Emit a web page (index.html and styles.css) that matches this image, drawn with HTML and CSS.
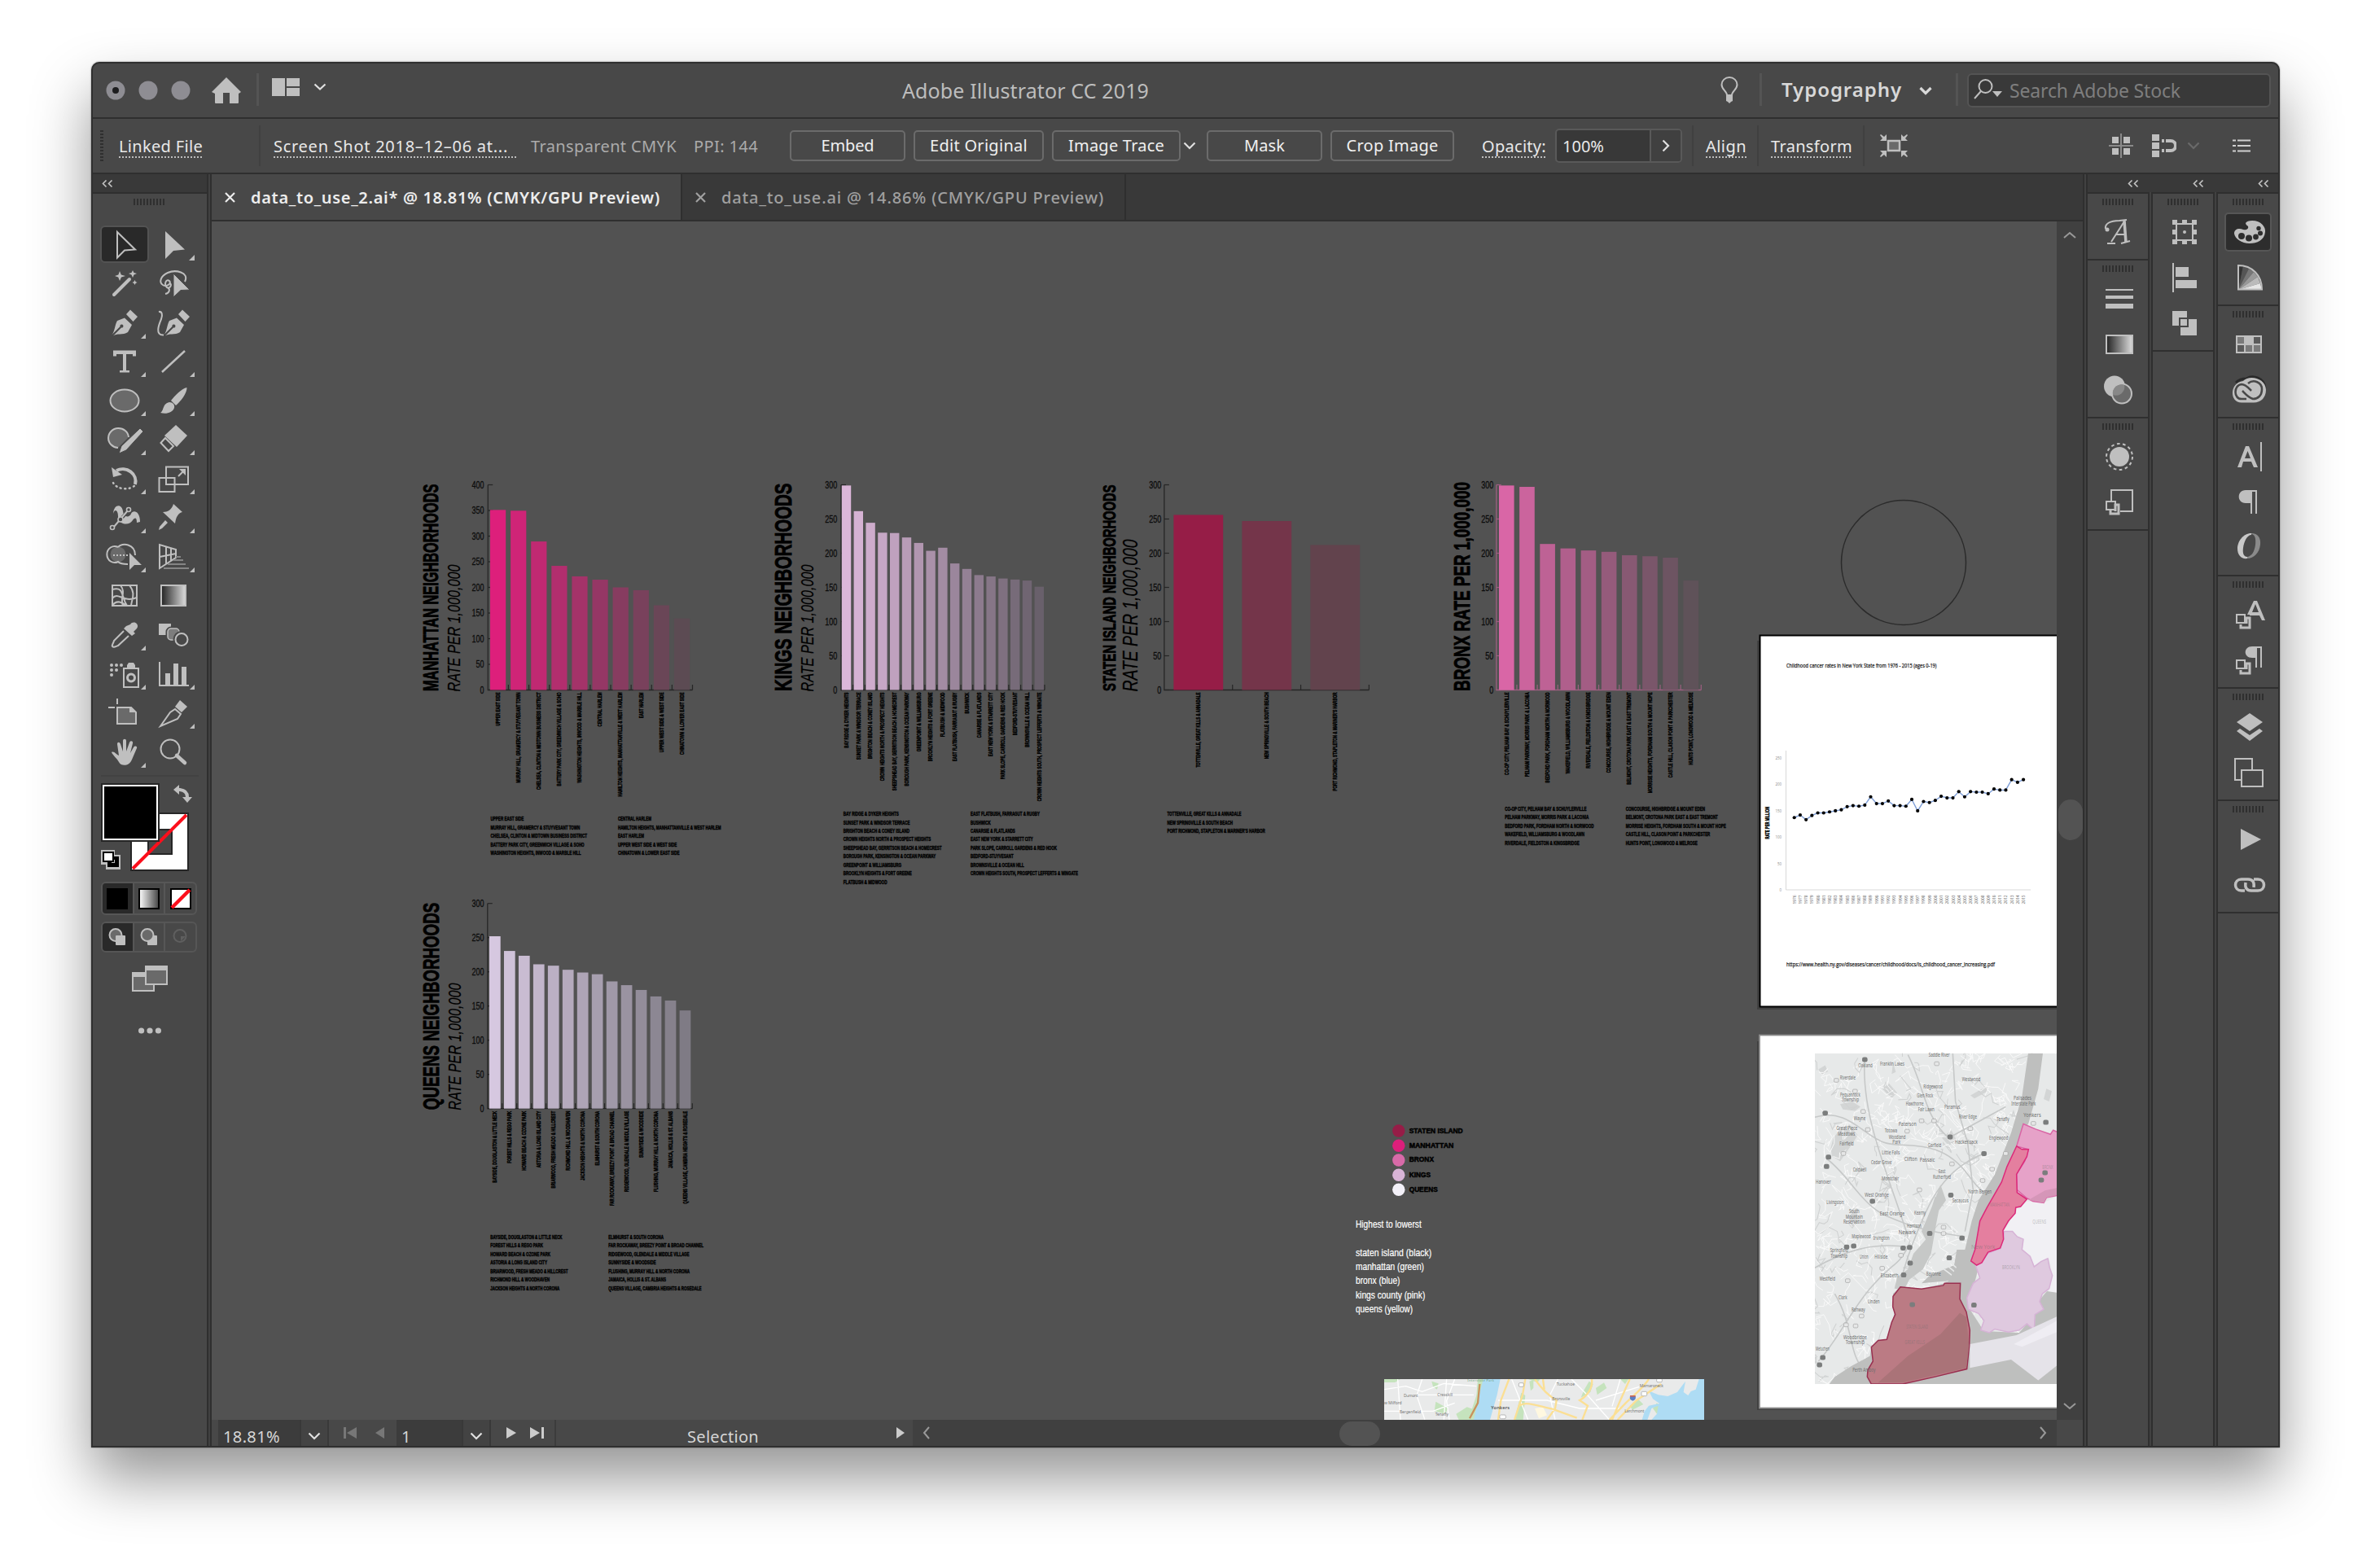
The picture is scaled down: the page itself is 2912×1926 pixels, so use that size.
FILE: index.html
```html
<!DOCTYPE html>
<html lang="en">
<head>
<meta charset="utf-8">
<title>Adobe Illustrator CC 2019</title>
<link rel="stylesheet" href="styles.css">
</head>
<body>
<div class="window">
  <header class="titlebar">
    <svg class="lights" width="104" height="26" viewBox="130 99 104 26"><g class="light"><circle cx="142" cy="112" r="11.5"/><circle cx="182" cy="112" r="11.5"/><circle cx="222" cy="112" r="11.5"/></g><circle cx="142" cy="112" r="4" fill="#1d1d1f"/></svg>
    <svg class="home" width="36" height="32" viewBox="0 0 36 32"><path class="f" d="M18 0L36 18l-3 2v11q0 1-1 1H22V19h-8v13H5q-1 0-1-1V20l-4-2z"/></svg>
    <i class="rule r-home"></i>
    <svg class="arrange" width="34" height="22" viewBox="0 0 34 22"><path class="f" d="M0 0h16v22H0zM18 0h16v10H18zM18 12h16v10H18z"/></svg>
    <svg class="arrange-chev" width="16" height="10" viewBox="0 0 16 10"><path class="chev" d="M1.5 1.5L8 7.5l6.5-6"/></svg>
    <h1 class="app-title" data-fit="303">Adobe Illustrator CC 2019</h1>
    <svg class="bulb" width="22" height="34" viewBox="0 0 22 34"><path class="s" d="M8 23C8 18 1.5 16 1.5 10a9.5 9 0 0 1 19 0c0 6-6.500 8-6.500 13z"/><path class="f" d="M7 23h8v7l-2 1-2 2-2-2-2-1z"/></svg>
    <i class="rule r-bulb"></i>
    <span class="workspace" data-fit="148">Typography</span>
    <svg class="ws-chev" width="16" height="11" viewBox="0 0 16 11"><path class="chev bold" d="M1.500 2L8 8.500 14.500 2"/></svg>
    <i class="rule r-ws"></i>
    <div class="search">
      <svg width="36" height="28" viewBox="0 0 36 28"><circle class="s" cx="14.500" cy="9" r="8"/><path class="s" d="M9 15L1 24"/><path class="f" d="M23 15h12l-6 7z"/></svg>
      <span data-fit="210">Search Adobe Stock</span>
    </div>
  </header>

  <div class="control">
    <i class="dots"></i>
    <span class="link linked" data-fit="103">Linked File</span>
    <i class="bar b1"></i>
    <span class="link file"><span data-fit="288">Screen Shot 2018–12–06 at...</span></span>
    <span class="dim mode" data-fit="179">Transparent CMYK</span>
    <span class="dim ppi" data-fit="79">PPI: 144</span>
    <button class="btn embed"><span data-fit="65">Embed</span></button>
    <button class="btn edit"><span data-fit="120">Edit Original</span></button>
    <button class="btn trace"><span data-fit="118">Image Trace</span></button>
    <svg class="trace-chev" width="16" height="10" viewBox="0 0 16 10"><path class="chev" d="M1.500 1.500L8 8l6.500-6.500"/></svg>
    <button class="btn mask"><span data-fit="50">Mask</span></button>
    <button class="btn crop"><span data-fit="113">Crop Image</span></button>
    <span class="link opacity" data-fit="79">Opacity:</span>
    <div class="field"><span class="value" data-fit="51">100%</span><span class="step"><svg width="10" height="16" viewBox="0 0 10 16"><path class="chev" d="M1.500 1.500L8 8l-6.500 6.500"/></svg></span></div>
    <i class="bar b2"></i>
    <span class="link align" data-fit="50">Align</span>
    <i class="bar b3"></i>
    <span class="link transform" data-fit="100">Transform</span>
    <i class="bar b4"></i>
    <svg class="isolate" width="34" height="30" viewBox="0 0 34 30"><rect x="10" y="9" width="14" height="12" fill="#6a6a6a" stroke="#bfbfbf" stroke-width="2.500"/><path class="f" d="M8 1v8H0l3-3-3-4 1-1 4 3zM26 1v8h8l-3-3 3-4-1-1-4 3zM8 29v-8H0l3 3-3 4 1 1 4-3zM26 29v-8h8l-3 3 3 4-1 1-4-3z"/></svg>
    <svg class="snap" width="30" height="30" viewBox="0 0 30 30"><path class="f" d="M4 4h8v8H4zM18 4h8v8h-8zM4 18h8v8H4zM18 18h8v8h-8z"/><path d="M15 0v30M0 15h30" stroke="#8a8a8a" stroke-width="2"/></svg>
    <svg class="magnet" width="30" height="28" viewBox="0 0 30 28"><path class="f" d="M0 0h9v8H0zM0 10h9v8H0zM0 20h9v8H0z"/><path d="M17 8h6a6 6 0 0 1 0 12h-6" fill="none" stroke="#bfbfbf" stroke-width="4"/><path class="f" d="M12 6h3v4h-3zM12 18h3v4h-3z"/></svg>
    <svg class="dim-chev" width="16" height="10" viewBox="0 0 16 10"><path class="chev" d="M1.500 1.500L8 8l6.500-6.500"/></svg>
    <svg class="menu" width="22" height="16" viewBox="0 0 22 16"><path d="M0 1.500h4M0 8h4M0 14.500h4M6 1.500h16M6 8h16M6 14.500h16" stroke="#cfcfcf" stroke-width="2"/></svg>
  </div>

  <main class="content">
    <aside class="toolbox">
      <div class="panel-head left"><svg width="14" height="9" viewBox="0 0 14 9"><path class="coll" d="M5.500.5l-4 4 4 4M12.500.5l-4 4 4 4"/></svg></div>
      <div class="toolbody">
        <i class="grip"></i>
        <div class="tools">
          <svg class="on"><path class="s" d="M-9-15L13 6.500 0 7.500-9 16.500z"/></svg>
          <svg><path class="f" d="M-10-16L14 6.500 0 8-10 18z"/><path class="f" d="M26 13v7h-7z"/></svg>
          <svg><path d="M-13 14L6-5" stroke="#bfbfbf" stroke-width="4" stroke-linecap="round"/><path class="f" d="M-6-15l1.800 4.500L1-9l-5 1.600L-6-3l-1.800-4.400L-12-9l4.400-1.500zM10-16l1.500 3 3.500 1-3.500 1.500L10-7l-1.500-3.500L5-12l3.500-1zM12.500-4l1 2 2 1-2 1-1 2-1-2-2-1 2-1z"/></svg>
          <svg><path class="s" d="M14-2C20-14 2-17-7-13-16-9-18-1-13 2-8 5-2 0-5-3-9-6-12 1-8 5-4 7-2 2-4 0M-8 5C-3 7-5 12-10 13"/><path class="f" d="M0-12L20 8 9 8.500 0 17z" stroke="#484848"/></svg>
          <svg><path class="f" d="M-16 15.500C-12 12-12 3-9-2L0-5.500 9 3 4 12C-2 16-10 13-14 16.500L-4 6.500A2 2 0 1 0-5.500 5zM2-10L7-15.500 16-7 10.500-1z"/><path class="f" d="M26 14v6h-6z"/></svg>
          <svg><path class="f" d="M-12 15.500C-8 12-8 3-5-2L4-5.500 13 3 8 12C2 16-6 13-10 16.500L0 6.500A2 2 0 1 0-1.500 5zM6-10L11-15.500 20-7 14.500-1z"/><path class="s" d="M-18-13c4-1 5 4 3 9-3 7-8 20 3 19.500"/></svg>
          <svg><path class="f" d="M-14-13.500h28v7h-4v-2.500H2v20h4V13.500H-6V11h4V-9h-8v2.500h-4z"/><path class="f" d="M26 13v6h-6z"/></svg>
          <svg><path d="M-14 13L14-13" stroke="#bfbfbf" stroke-width="2.500"/><path class="f" d="M26 13v6h-6z"/></svg>
          <svg><ellipse cx="0" cy="0" rx="17.500" ry="13.500" fill="#6a6a6a" stroke="#bfbfbf" stroke-width="2"/><path class="f" d="M26 13v6h-6z"/></svg>
          <svg><path class="f" d="M16.500-16C17-9 8 2 3 6L-3 0C1-5 10-15 16.500-16zM-5 2c4 0 7 3 6 7-2 6-10 8-17 6 5-3 2-11 11-13z"/><path class="f" d="M26 13v6h-6z"/></svg>
          <svg><path d="M5-3A12.500 12 0 1 0-8 10" fill="#6a6a6a" stroke="#bfbfbf" stroke-width="2"/><path class="f" d="M19-14l4 4L2 13l-9 4 3-9z" stroke="#484848"/><path class="f" d="M26 13v6h-6z"/></svg>
          <svg><path class="f" d="M3-18L17-5 4 9-11-5z"/><path class="s" d="M-10-2l-5.500 6L-6 14l6-6z"/><path class="f" d="M26 13v6h-6z"/></svg>
          <svg><path d="M-10-10A16 15 0 0 1 13 7" fill="none" stroke="#bfbfbf" stroke-width="4"/><path class="f" d="M-16-14l2 12 11-3z"/><path d="M-14 5A16 12 0 0 0 13 8" fill="none" stroke="#bfbfbf" stroke-width="2.500" stroke-dasharray="1 4.500" stroke-linecap="round"/><path class="f" d="M26 13v6h-6z"/></svg>
          <svg><path class="s" d="M-9-14.500h27V7H-9zM-17.500-1H1.500v17h-19zM6-3l7-7"/><path class="f" d="M7-12h8v8z"/><path class="f" d="M26 13v6h-6z"/></svg>
          <svg><path class="f" d="M-14-5C-13-18-3-17-2-8-1 0 6 0 8-5 10-10 19-9 19 5L15 6C15 0 13-1 10 3 5 11-8 8-8-2-8-9-12-12-14-5z"/><path d="M-14 12L5-9" stroke="#484848" stroke-width="4"/><path class="s" d="M-13 11L4-9"/><g class="node"><circle cx="-15" cy="12" r="2.500"/><circle cx="-5" cy="2" r="3"/><circle cx="5" cy="-10" r="2.500"/></g><path class="f" d="M26 13v6h-6z"/></svg>
          <svg><path class="f" d="M0-17L11-7C6-6 3-1 2 7L-13-7C-7-7-2-10 0-17zM-10 3l3 3-7 7-4 2 1-4z"/><path class="f" d="M26 13v6h-6z"/></svg>
          <svg><circle cx="-8" cy="-3" r="9.500" fill="#6a6a6a"/><path class="s" d="M-8-12C-3-18 13-16 13-2M-8-12a9.500 10 0 1 0 0 18C-5 9-1 9 4 9"/><path d="M-14-2H5" stroke="#bfbfbf" stroke-width="2" stroke-dasharray="2 2"/><path class="f" d="M6-5L21 10l-9 0-6 6z"/><path class="f" d="M26 13v6h-6z"/></svg>
          <svg><path class="s" d="M-17-15V14L3 1V-9zM-17 0L3-4M-9-12V9M-3-10V5"/><path d="M3 0h6M0 4h12M-7 9H15M-12 14H19" stroke="#858585" stroke-width="2"/><path class="f" d="M26 13v6h-6z"/></svg>
          <svg><path class="s" d="M-15-13h30v25h-30zM-15 3C-8-6-2 9 15 2M-5-13C2-4-6 2-2 12M6-13c8 10 3 16 2 25M-15-8C0-12-5 0 3 12M-15 12C-10 4-2 8 2 12"/></svg>
          <svg><rect x="-15" y="-13" width="30" height="25" fill="url(#gr)" stroke="#bfbfbf" stroke-width="2"/></svg>
          <svg><path class="f" d="M7-13c4-6 12 0 8 5l-4 4 2 2-4 3L-1-8l3-3z"/><path class="s" d="M-1-5L-13 7c-1 4-3 5-2 7 2 2 4 0 7-1L5 1"/><path class="f" d="M26 13v6h-6z"/></svg>
          <svg><path class="f" d="M-18-14h15v14h-15z"/><rect x="-7" y="-8" width="14" height="14" rx="4" fill="#7d7d7d" stroke="#484848" stroke-width="5"/><rect x="-7" y="-8" width="14" height="14" rx="4" fill="#7d7d7d" stroke="#bfbfbf" stroke-width="1.500"/><circle cx="10" cy="5.500" r="8" fill="#484848" stroke="#484848" stroke-width="5"/><circle class="s" cx="10" cy="5.500" r="7.500"/></svg>
          <svg><path class="s" d="M-1-7h18v23H-1z"/><circle cx="8" cy="4.500" r="4.500" fill="none" stroke="#bfbfbf" stroke-width="3"/><path class="f" d="M3-7v-4l2-3h6l2 3v4z"/><g class="f"><circle cx="-16" cy="-11" r="2"/><circle cx="-10" cy="-11" r="2"/><circle cx="-4" cy="-11" r="2"/><circle cx="-16" cy="-5" r="2"/><circle cx="-10" cy="-5" r="2"/><circle cx="-16" cy="1" r="2"/></g><path class="f" d="M26 13v6h-6z"/></svg>
          <svg><path class="s" d="M-17-15V14h36"/><path class="f" d="M-10-1h6v14h-6zM0-13h6v26H0zM10-9h6v22h-6z"/><path class="f" d="M26 13v6h-6z"/></svg>
          <svg><path d="M-9-7H8l6 6V13H-9z" fill="#6a6a6a" stroke="#bfbfbf" stroke-width="2"/><path class="f" d="M6-8l8 7H6z"/><path class="s" d="M-20-7h8M-9-18v7"/></svg>
          <svg><path class="s" d="M-16 16L-4-1 2-5 9 1 5 7z"/><path class="f" d="M8-16L17-8 10-1 2-8z"/><path class="f" d="M26 13v6h-6z"/></svg>
          <svg><path class="f" d="M-16 0c3-2 6 3 9 4L-9-10c0-3 3-3 4 0l3 9 0-13c0-3 4-3 4 0V-1L6-12c1-3 5-2 4 1L7 1l4-7c2-3 5-1 4 1L9 9C6 17-4 18-7 12-9 8-15 3-16 0z"/><path class="f" d="M26 13v6h-6z"/></svg>
          <svg><circle class="s" cx="-4" cy="-4" r="11.500"/><path d="M4 4L14 13" stroke="#bfbfbf" stroke-width="4.500" stroke-linecap="round"/></svg>
        </div>
        <svg class="swatches" width="124" height="124" viewBox="122 950 124 124">
          <path d="M124 953h120" stroke="#424242" stroke-width="2"/>
          <rect x="160" y="998" width="72" height="72" fill="#262626"/><rect x="162" y="1000" width="68" height="68" fill="#fff"/><rect x="181" y="1018" width="31" height="32" fill="#262626"/><rect x="183" y="1020" width="27" height="28" fill="#484848"/><path d="M163 1067L229 1001" stroke="#fc0f1c" stroke-width="4"/>
          <rect x="124" y="962" width="72" height="72" fill="#262626"/><rect x="126" y="964" width="68" height="68" fill="#fff"/><rect x="128" y="966" width="64" height="64" fill="#000"/>
          <path d="M219 970h2q9 1 9 9" fill="none" stroke="#bfbfbf" stroke-width="4"/><path class="f" d="M213 970l7-6v12zM224 979h12l-6 7z"/>
          <path class="f" d="M124 1044h17v6h7v18h-18v-6h-6z"/><path fill="#000" d="M132 1052h14v13h-14z"/><path fill="#bfbfbf" d="M137 1056h4v4h-4z"/><rect x="127" y="1047" width="12" height="11" fill="#fff" stroke="#000" stroke-width="2"/>
        </svg>
        <div class="segments paint">
          <span class="on"><svg width="28" height="28" viewBox="0 0 28 28"><rect x="1" y="1" width="26" height="26" fill="#000"/></svg></span>
          <span><svg width="28" height="28" viewBox="0 0 28 28"><rect x="2" y="2" width="24" height="24" fill="url(#gw)" stroke="#000" stroke-width="2"/></svg></span>
          <span><svg width="28" height="28" viewBox="0 0 28 28"><rect x="2" y="2" width="24" height="24" fill="#fff" stroke="#000" stroke-width="2"/><path d="M3 25L25 3" stroke="#fc0f1c" stroke-width="4.500"/></svg></span>
        </div>
        <div class="segments draw">
          <span class="on"><svg width="22" height="22" viewBox="0 0 22 22"><circle cx="9" cy="8.500" r="7.500" fill="#6a6a6a" stroke="#bfbfbf" stroke-width="2"/><rect class="f" x="9" y="9" width="12" height="12" rx="1"/></svg></span>
          <span><svg width="22" height="22" viewBox="0 0 22 22"><rect class="f" x="9" y="9" width="12" height="12" rx="1"/><circle cx="9" cy="8.500" r="7.500" fill="#6a6a6a" stroke="#bfbfbf" stroke-width="2"/></svg></span>
          <span><svg width="22" height="22" viewBox="0 0 22 22"><circle cx="10" cy="9.500" r="7.500" fill="none" stroke="#5f5f5f" stroke-width="2"/><path fill="#5f5f5f" d="M11 10h6l-6 6z"/></svg></span>
        </div>
        <svg class="screen" width="44" height="33" viewBox="0 0 44 33"><rect x="1" y="9" width="26" height="22" fill="#6a6a6a" stroke="#bfbfbf" stroke-width="2"/><path class="f" d="M0 8h28v6H0z"/><rect x="17" y="1" width="26" height="22" fill="#6a6a6a" stroke="#bfbfbf" stroke-width="2"/><path class="f" d="M16 0h28v6H16z"/></svg>
        <svg class="more" width="28" height="8" viewBox="0 0 28 8"><g class="f"><circle cx="3.600" cy="4" r="3.600"/><circle cx="14" cy="4" r="3.600"/><circle cx="24.400" cy="4" r="3.600"/></g></svg>
      </div>
    </aside>
    <i class="gutter"></i>
    <section class="document">
      <nav class="tabs">
        <div class="tab active"><svg width="13" height="13" viewBox="0 0 13 13"><path d="M1 1l11 11M12 1L1 12"/></svg><span data-fit="503">data_to_use_2.ai* @ 18.81% (CMYK/GPU Preview)</span></div>
        <div class="tab second"><svg width="13" height="13" viewBox="0 0 13 13"><path d="M1 1l11 11M12 1L1 12"/></svg><span data-fit="470">data_to_use.ai @ 14.86% (CMYK/GPU Preview)</span></div>
      </nav>
      <div class="view">
        <svg class="art" id="art" width="2266" height="1472" viewBox="260 272 2266 1472">
          <defs>
            <linearGradient id="gr"><stop offset="0" stop-color="#222"/><stop offset="1" stop-color="#ddd"/></linearGradient>
            <linearGradient id="gw"><stop offset="0" stop-color="#fff"/><stop offset="1" stop-color="#444"/></linearGradient>
            <clipPath id="mapclip"><rect x="297" y="837" width="900" height="637"/></clipPath>
            <clipPath id="colorclip"><rect x="180" y="1002" width="1179" height="150"/></clipPath>
          </defs>
          <circle cx="2338" cy="691" r="76.500" fill="none" stroke="#2b2b2b" stroke-width="1.500"/>
          <rect x="2158" y="787" width="400" height="453" fill="#414141"/>
          <rect x="2161.500" y="780.500" width="400" height="456" fill="#fff" stroke="#000" stroke-width="2"/>
          <rect x="2158" y="1279" width="400" height="453" fill="#414141"/>
          <rect x="2161" y="1271.500" width="400" height="458" fill="#fff" stroke="#8e8e8e" stroke-width="1.800"/>
          <g transform="translate(2130 760) scale(.33333 .63776)"><g clip-path="url(#mapclip)" id="graymap">
            <rect x="297" y="837" width="900" height="637" fill="#e7e9e9"/>
            <g fill="#d3d5d5"><path d="M365 1000l30-20 30-5 30 20-25 20-40 30-30-10-5-15zM390 935l45-5 30 10-20 8-45-3zM545 905l25-10 30 18-20 10zM310 868l25-8 10 12-25 6zM870 918l55-16 10 8-50 14zM585 855l10 18-15 4zM430 1140l20-10 5 30-20 15-15-10zM1150 905l20 5-10 20-20-5zM765 1000l35-15 20 20-30 10z"/></g>
            <g fill="none" stroke="#c3c5c5" id="roads"></g>
            <path fill="#bebfbe" d="M1083 837H1137L1120 905 1085 970 1060 1000 1040 1045 980 1100 930 1160 905 1225 900 1250 880 1290 868 1330 920 1372 1050 1375 1188 1290V1474H470L350 1474 370 1460 430 1440 500 1420 505 1400 560 1388 590 1340 585 1300 612 1287 690 1291 775 1280 790 1275 690 1280 720 1265 810 1245 820 1215 850 1215 875 1160 900 1120 960 1070 1020 990 1060 920z"/>
            <path fill="#c6c8c7" d="M590 1290l10-22 40-15 20-30 50-30 0-30 30-50 20 10-15 40-20 60-30 30-50 20-20 20zM690 1180l40-50 30-40 20 30-40 30-30 50z"/>
            <path d="M760 1235l50 22M770 1228l48 22M755 1246l46 18" stroke="#e7e9e9" stroke-width="3"/>
            <g stroke-width="1.500">
              <path fill="#f1f0f4" d="M1078 1122L1140 1125 1197 1110V1300L1150 1310 1172 1265 1160 1232 1105 1248 1060 1215 1035 1185 995 1178 1035 1145z"/>
              <path fill="#bebfbe" d="M1112 1320l40-25 36 3v45l-40 12-25-5 15-15z"/>
              <path class="ns" fill="#dfc9df" stroke="#d6b3d6" d="M995 1180L1025 1180 1042 1190 1065 1195 1060 1215 1090 1228 1105 1248 1130 1238 1155 1232 1162 1250 1172 1265 1160 1290 1135 1300 1125 1315 1140 1330 1108 1340 1105 1370 1078 1358 1050 1370 1010 1374 960 1368 940 1375 908 1370 920 1352 900 1338 862 1330 857 1308 880 1280 905 1270 890 1247 935 1222 980 1213z"/>
              <path fill="#e5e3e9" d="M868 1397L1040 1380 1197 1342V1435L1120 1467 1020 1427 868 1443z"/>
              <path fill="#efedf3" d="M1030 1397L1197 1350V1372L1060 1402z"/>
              <path class="ns" fill="#e6a2c8" stroke="#d965a5" d="M1065 973L1110 983 1165 993 1175 985 1197 990V1110L1150 1115 1140 1125 1100 1122 1078 1116 1042 1100 1040 1070 1070 1045 1084 1022 1040 1016z"/>
              <path fill="#d596b8" d="M1085 1119l60-18 45-5v14l-40 5-10 10z"/>
              <path class="ns" fill="#e47f9f" stroke="#dc2a7a" d="M1040 1016L1060 1022 1084 1022 1078 1036 1040 1070 1042 1105 1078 1118 1055 1132 1037 1134 1035 1145 1010 1160 990 1178 992 1195 980 1212 935 1220 912 1240 893 1245 872 1237 887 1215 905 1160 930 1135 985 1085 1005 1055z"/>
              <path class="ns" fill="#bb7b84" stroke="#993050" d="M833 1280L831 1310 855 1335 868 1370 866 1400 857 1445 740 1460 620 1474H505L490 1460 492 1447 511 1430 505 1403 530 1390 562 1388 580 1355 593 1340 584 1325 585 1305 612 1287 690 1291 770 1284 775 1280z"/>
              <path fill="#aa7378" d="M831 1337L855 1345 865 1400 855 1443 620 1471H530L640 1420 760 1378z"/>
            </g>
          </g></g>
          <g transform="translate(1640 1360) scale(.33333)"><g clip-path="url(#colorclip)" fill="none">
            <rect x="180" y="1002" width="1179" height="150" fill="#e9eaea"/>
            <g fill="#c5e3bd"><path d="M180 1002h60l-20 12h-40zM355 1010l25 8-5 22-15-10zM370 1085l45 25-10 20-40-10zM445 1130l40-25 30 10-20 37h-40zM525 1002h20l-25 150h-30l30-90zM710 1002h45l-10 12zM660 1152l25-100 15 10-8 90zM715 1010l15-5v30l-10 10zM935 1010l15 10-10 30-35 20 10-25zM960 1035l30-20 10 20-35 25zM1050 1002h30l-12 18zM1085 1100l30-25 20 20-40 20zM1185 1090l15 20-15 20-15-20z"/></g>
            <path fill="#fff8e0" d="M735 1110l30-5 15 30-30 12z"/>
            <g stroke="#fff" stroke-width="4"><path d="M180 1040l80-12 60 20 80-30 120 10M230 1002l10 150M320 1002l-20 60 30 90M410 1002l-10 150M180 1120h180l80-30M260 1060h250M440 1002l-30 80 10 70M650 1002l60 150M820 1002l-30 60 20 90M600 1080h180l120 30 150 0M870 1002l60 60 80 90M1050 1002l-30 100M960 1080l160-50"/></g>
            <path fill="#aedcf4" d="M545 1002H608L596 1060 570 1152H510L530 1060zM1359 1002H1340L1328 1040 1310 1047 1300 1062 1283 1050 1290 1010 1275 1030 1260 1050 1225 1065 1190 1060 1155 1045 1170 1075 1195 1092 1155 1100 1140 1120 1130 1152H1150L1165 1110 1190 1100 1185 1130 1165 1152H1359z"/>
            <path fill="#e9eaea" d="M1320 1002h14l-6 30-12-4zM1290 1030l16-20v30l-14 8z"/>
            <g stroke="#fbdf94" stroke-width="7"><path d="M640 1002L610 1080 600 1152M700 1002L690 1060 660 1152M735 1002C755 1030 780 1060 815 1080L810 1110 780 1152M765 1002L770 1040M680 1100C700 1080 760 1105 800 1112L890 1145M945 1002C950 1040 920 1070 900 1080L930 1100 910 1152M1155 1002C1130 1040 1100 1060 1070 1090L1010 1152M1200 1020L1110 1080 1040 1152M1085 1002l-40 90-25 60"/></g>
            <path d="M532 1020L525 1090 495 1147" stroke="#c8925c" stroke-width="7"/>
            <g fill="#fff" stroke="#999" stroke-width="2"><rect x="676" y="1016" width="18" height="14" rx="4"/><rect x="606" y="1134" width="22" height="14" rx="4"/><rect x="1128" y="1048" width="20" height="16" rx="4"/><rect x="1184" y="1000" width="20" height="13" rx="4"/></g>
            <path fill="#5b7fc4" d="M1086 1064h20c3 12-4 15-10 18-6-3-13-6-10-18z"/><path fill="#c65" d="M1086 1062h20v5h-20z"/>
            <g class="maplabel"><text x="252" y="1068" textLength="52">Dumont</text><text x="376" y="1064" textLength="56">Cresskill</text><text x="180" y="1094" textLength="65">w Milford</text><text x="237" y="1128" textLength="78">Bergenfield</text><text x="368" y="1137" textLength="49">Tenafly</text><text class="city" x="574" y="1112" textLength="68">Yonkers</text><text x="815" y="1026" textLength="67">Tuckahoe</text><text x="799" y="1080" textLength="66">Bronxville</text><text x="1121" y="1033" textLength="88">Mamaroneck</text><text x="1066" y="1125" textLength="72">Larchmont</text><text class="park" x="487" y="1011" textLength="98">Interstate Park</text></g>
          </g></g>
        </svg>
        <div class="vscroll">
          <svg class="up" width="16" height="10" viewBox="0 0 16 10"><path d="M1 8l7-6 7 6"/></svg>
          <i class="vthumb"></i>
          <svg class="down" width="16" height="10" viewBox="0 0 16 10"><path d="M1 2l7 6 7-6"/></svg>
        </div>
      </div>
      <footer class="status">
        <span class="zoom"><span data-fit="70">18.81%</span></span>
        <span class="drop"><svg width="16" height="10" viewBox="0 0 16 10"><path class="chev" d="M1.500 1.500L8 8l6.500-6.500"/></svg></span>
        <svg class="nav" width="80" height="18" viewBox="0 0 80 18"><g fill="#777"><path d="M4 2h3v14H4zM20 2v14L8 9zM54 2v14L43 9z"/></g></svg>
        <span class="page">1</span>
        <span class="drop"><svg width="16" height="10" viewBox="0 0 16 10"><path class="chev" d="M1.500 1.500L8 8l6.500-6.500"/></svg></span>
        <svg class="nav2" width="86" height="18" viewBox="0 0 86 18"><g fill="#ccc"><path d="M21 2v14l12-7zM50 2v14l12-7zM64 2h3v14h-3z"/></g></svg>
        <span class="tool"><span data-fit="88">Selection</span></span>
        <svg class="play" width="12" height="16" viewBox="0 0 12 16"><path fill="#ccc" d="M1 1v14l10-7z"/></svg>
        <div class="hscroll">
          <svg class="hl" width="10" height="16" viewBox="0 0 10 16"><path d="M8 1L2 8l6 7"/></svg>
          <i class="hthumb"></i>
          <svg class="hr" width="10" height="16" viewBox="0 0 10 16"><path d="M2 1l6 7-6 7"/></svg>
        </div>
        <i class="corner"></i>
      </footer>
    </section>
    <i class="gutter"></i>
    <aside class="dock">
      <div class="panel-head"><svg width="14" height="9" viewBox="0 0 14 9"><path class="coll" d="M5.500.5l-4 4 4 4M12.500.5l-4 4 4 4"/></svg></div>
      <div class="group"><i class="grip"></i>
        <svg><path class="s" d="M-15-4C-16-10-10-14 2-14L11-15"/><circle class="f" cx="-13" cy="-3" r="2.500"/><path class="s" d="M8-13L-8 12M-13 14h10M4 14l11-3M-3 3H8"/><path d="M8-14L10 13" stroke="#bfbfbf" stroke-width="3.500"/></svg></div>
      <div class="group"><i class="grip"></i>
        <svg><path class="f" d="M-15-12h34v2h-34zM-15-4h34v4h-34zM-15 6h34v6h-34z"/></svg>
        <svg><rect x="-14" y="-11" width="32" height="22" fill="url(#gr)" stroke="#bfbfbf" stroke-width="2"/></svg>
        <svg><circle class="f" cx="-4" cy="-4.500" r="13"/><circle cx="5" cy="4.500" r="12" fill="#6a6a6a" stroke="#bfbfbf" stroke-width="2"/><path fill="#888" d="M-6 6C-8-3 2-9 8-6 10 2 2 9-6 6z"/></svg></div>
      <div class="group"><i class="grip"></i>
        <svg><circle class="f" cx="2" cy="0" r="12"/><circle cx="2" cy="0" r="16" fill="none" stroke="#bfbfbf" stroke-width="2" stroke-dasharray="3.700 3.480"/></svg>
        <svg><path class="s" d="M-8-1v-14h26v26H3"/><path class="s" d="M-14-1h11v10h-11z"/><path d="M-9 10v4H1V3h-4v8" fill="none" stroke="#bfbfbf" stroke-width="3"/></svg></div>
      <div class="fill"></div>
    </aside>
    <i class="gutter low"></i>
    <aside class="dock">
      <div class="panel-head"><svg width="14" height="9" viewBox="0 0 14 9"><path class="coll" d="M5.500.5l-4 4 4 4M12.500.5l-4 4 4 4"/></svg></div>
      <div class="group"><i class="grip"></i>
        <svg><path class="s" d="M-8-10h20v20H-8z"/><path class="f" d="M-13-15h6v6h-6zM-1-15h6v5h-6zM11-15h6v6h-6zM-13-3h5v6h-5zM12-3h5v6h-5zM-13 9h6v6h-6zM-1 10h6v5h-6zM11 9h6v6h-6z"/><circle class="f" cx="2" cy="0" r="2"/></svg>
        <svg><path class="f" d="M-13-18h2v36h-2zM-9-13H7v12H-9zM-9 3h26v10H-9z"/></svg>
        <svg><path class="f" d="M-13-15H5v8h-10v10h-8zM7-5h10v20H-3V5H7zM-3-5h8v8h-8z"/></svg></div>
      <div class="fill"></div>
    </aside>
    <i class="gutter low"></i>
    <aside class="dock">
      <div class="panel-head"><svg width="14" height="9" viewBox="0 0 14 9"><path class="coll" d="M5.500.5l-4 4 4 4M12.500.5l-4 4 4 4"/></svg></div>
      <div class="group"><i class="grip"></i>
        <svg><rect x="-28" y="-23" width="56" height="46" rx="4" fill="#2d2d2d" stroke="#565656" stroke-width="2"/><path class="f" d="M5-14C16-14 22-6 21 0 20 10 11 14 2 14-8 14-16 8-17 2-17-4-11-5-6-3-2-2 1-4 0-7-1-8-3-9-3-11-2-13 1-14 5-14z"/><g fill="#2d2d2d"><circle cx="-8" cy="5" r="4"/><circle cx="1" cy="7.500" r="4"/><circle cx="9.500" cy="6" r="3.400"/><circle cx="15" cy="1.500" r="3"/><circle cx="13" cy="-4.500" r="2.700"/></g></svg>
        <svg><path fill="#333" d="M-12-15V15L-6-14z"/><path fill="#555" d="M-12 15L-6-14 1-11z"/><path fill="#777" d="M-12 15L1-11 7-7z"/><path fill="#999" d="M-12 15L7-7 12-1z"/><path fill="#bbb" d="M-12 15L12-1 15 7z"/><path fill="#e6e6e6" d="M-12 15L15 7 17 15z"/><path class="s" d="M-12-15V14.500H17C17-3 5-15-12-15z"/></svg></div>
      <div class="group"><i class="grip"></i>
        <svg><path class="f" d="M-15-11h32v22h-32z"/><path fill="#7a7a7a" d="M-13-9h8v8h-8zM-3 1h8v8h-8zM7 1h8v8H7z"/><path fill="#5a5a5a" d="M7-9h8v8H7zM-13 1h8v8h-8z"/></svg>
        <svg><path d="M-15-9C-10-14-4-14-2-14 6-19 20-15 21-2" fill="none" stroke="#2a2a2a" stroke-width="3"/><path class="f" d="M-8 15.500C-23 15.500-23-9-6-11 1-19 22-15 22 0 22 9 16 15.500 7 15.500z"/><path d="M-2 11H-8C-18 11-18-6-8-7-3-7 1-2 4 1M0-8C7-14 17-9 17-1 17 7 12 11 6 11 0 9-4 4-7 1" fill="none" stroke="#484848" stroke-width="2.600"/></svg></div>
      <div class="group"><i class="grip"></i>
        <svg><path class="f" fill-rule="evenodd" d="M-13 13L-3-13H1L12 13H7L4 6H-6L-8 13zM-4 2H3L-.500-7z"/><path class="f" d="M15-18h2v36h-2z"/></svg>
        <svg><path class="f" d="M-3-15H11V14H9V-13H5V14H3V1H-3C-14 1-14-15-3-15z"/></svg>
        <svg><path fill="#8a8a8a" fill-rule="evenodd" d="M4-18C12-18 16-12 15-4 14 6 7 13-1 13V11C5 10 8 4 9-4 10-12 8-17 4-17z"/><path fill="#c8c8c8" d="M4-18C-6-18-13-8-13 1-13 9-8 14-1 13V11C-5 11-7 7-6 0-5-8-1-16 4-16z"/></svg></div>
      <div class="group"><i class="grip"></i>
        <svg><path class="f" fill-rule="evenodd" d="M-1 0L7-17H11L21 7H17L14 1H2V0zM5-3H13L9-13z"/><path class="s" d="M-14 0h10v10h-10z"/><path d="M-9 12v4H2V4h-4v7" fill="none" stroke="#bfbfbf" stroke-width="3"/></svg>
        <svg><path class="f" d="M5-17H17V9H15V-15H11V9H9V-3H5C-6-3-6-17 5-17z"/><path class="s" d="M-14 0h10v10h-10z"/><path d="M-9 12v4H2V4h-4v7" fill="none" stroke="#bfbfbf" stroke-width="3"/></svg></div>
      <div class="group"><i class="grip"></i>
        <svg><path class="f" d="M2-17L18-6 2 5-14-6zM-14 5l4-3L2 10 14 2l4 3L2 17z"/></svg>
        <svg><path class="s" d="M-8 9h-8v-26H5v13M-8-3h26v20H-8z"/></svg></div>
      <div class="group"><i class="grip"></i>
        <svg><path class="f" d="M-9-13L16 0-9 13z"/></svg>
        <svg><path d="M-4 7H-8C-18 7-18-7-8-7H0C6-7 8-3 7 3M7-7H12C22-7 22 7 12 7H4C-2 7-4 3-3-3" fill="none" stroke="#bfbfbf" stroke-width="3.500"/></svg></div>
      <div class="fill"></div>
    </aside>
  </main>
</div>
<script src="script.js"></script>
</body>
</html>
```
FILE: styles.css
```css
* { box-sizing: border-box; }
html { background: #fff; }
body { margin: 0; height: 1926px; padding: 76px 0 0 112px; overflow: hidden; background: #fff; font-family: "Noto Sans", "Open Sans", sans-serif; }
svg { display: block; flex: none; }
i { display: block; flex: none; }
.f { fill: #bfbfbf; }
.s { fill: none; stroke: #bfbfbf; stroke-width: 2; }
.chev { fill: none; stroke: #e0e0e0; stroke-width: 2.2; }
.chev.bold { stroke-width: 3.2; stroke: #d8d8d8; }
.coll { fill: none; stroke: #c4c4c4; stroke-width: 1.6; }
[data-fit] { display: inline-block; white-space: nowrap; flex: none; }

.window {
  width: 2688px; height: 1702px;
  border: 2px solid #2f2f2f; border-radius: 10px 10px 0 0; overflow: hidden;
  background: #484848; display: flex; flex-direction: column;
  box-shadow: 0 0 2px rgba(0,0,0,.5), 0 38px 72px rgba(0,0,0,.42);
}

/* title bar */
.titlebar { height: 68px; border-bottom: 2px solid #2f2f2f; display: flex; align-items: center; flex: none; }
.lights { margin-left: 16px; }
.light { fill: #8e8d93; }
.home { margin-left: 26px; }
.rule { width: 3px; height: 40px; background: #545454; margin-bottom: 3px; }
.r-home { margin-left: 19px; }
.arrange { margin: 0 0 8px 16px; }
.arrange-chev { margin: 0 0 8px 17px; }
.app-title { margin: 0 0 0 707px; font-size: 25px; font-weight: 400; color: #bdbdbd; }
.bulb { margin-left: 702px; }
.r-bulb { margin-left: 26px; }
.workspace { margin-left: 24px; font-size: 24px; font-weight: 600; color: #d8d8d8; margin-bottom: 4px; }
.ws-chev { margin-left: 21px; }
.r-ws { margin-left: 29px; }
.search {
  margin-left: 11px; width: 373px; height: 42px; border: 2px solid #545454; border-radius: 6px;
  background: #393939; display: flex; align-items: center; padding-left: 6px; gap: 8px;
  font-size: 23px; color: #7e7e7e;
}

/* control bar */
.control { height: 68px; border-bottom: 2px solid #2f2f2f; display: flex; align-items: center; flex: none; font-size: 20px; color: #e9e9e9; }
.dots { width: 4px; height: 38px; margin-left: 9px; background: repeating-linear-gradient(#2f2f2f 0 2px, transparent 2px 4px); }
.link { line-height: 27px; height: 29px; padding-top: 1px; background: repeating-linear-gradient(90deg, #bdbdbd 0 2px, transparent 2px 4px) bottom left / 100% 2px no-repeat; }
.linked { margin-left: 19px; }
.bar { width: 2px; height: 50px; background: #404040; }
.b1 { margin-left: 69px; }
.file { margin-left: 16px; width: 299px; }
.dim { color: #ababab; }
.mode { margin-left: 17px; }
.ppi { margin-left: 21px; }
.btn {
  height: 38px; padding: 0 0 1px; border: 2px solid #6b6b6b; border-radius: 5px; background: none; color: #f0f0f0;
  font: 20px "Noto Sans", "Open Sans", sans-serif; flex: none;
}
.embed { width: 142px; margin-left: 39px; }
.edit { width: 160px; margin-left: 10px; }
.trace { width: 158px; margin-left: 10px; }
.trace-chev { margin-left: 3px; }
.mask { width: 142px; margin-left: 13px; }
.crop { width: 152px; margin-left: 10px; }
.opacity { margin-left: 34px; }
.field { margin-left: 11px; width: 156px; height: 42px; border: 2px solid #595959; border-radius: 5px; background: #383838; display: flex; align-items: center; overflow: hidden; }
.value { margin-left: 7px; margin-right: auto; }
.step { width: 38px; height: 100%; border-left: 2px solid #595959; background: #404040; display: flex; align-items: center; justify-content: center; }
.b2 { margin-left: 12px; }
.align { margin-left: 15px; }
.b3 { margin-left: 13px; }
.transform { margin-left: 15px; }
.b4 { margin-left: 13px; }
.isolate { margin-left: 19px; }
.snap { margin-left: 247px; }
.magnet { margin-left: 23px; }
.dim-chev { margin-left: 13px; opacity: .22; }
.menu { margin-left: 40px; }

/* main area */
.content { flex: 1; display: flex; min-height: 0; background: #484848; }
.gutter { width: 6px; background: linear-gradient(90deg, #2f2f2f 2px, #414141 2px 4px, #2f2f2f 4px); }
.gutter.low { margin-top: 22px; box-shadow: 0 -22px #393939; }
.panel-head { height: 24px; background: #393939; border-bottom: 2px solid #2f2f2f; display: flex; align-items: center; justify-content: flex-end; padding: 0 11px 0 0; }
.panel-head.left { justify-content: flex-start; padding-left: 11px; }
.grip { width: 38px; height: 8px; background: repeating-linear-gradient(90deg, #2f2f2f 0 2px, transparent 2px 4px); }

.toolbox { width: 140px; flex: none; }
.toolbody { display: flex; flex-direction: column; align-items: flex-start; padding: 6px 0 0 8px; }
.toolbody > .grip { margin-left: 42px; }
.tools { display: grid; grid-template-columns: 60px 60px; grid-auto-rows: 48px; margin: 24px 0 0 1px; }
.tools svg { width: 60px; height: 48px; }
.tools .on { background: #292929; border: 2px solid #535353; border-radius: 6px; width: 60px; height: 46px; margin-top: 1px; }
.node circle { fill: #484848; stroke: #bfbfbf; stroke-width: 1.6; }
.swatches { margin-top: 2px; }
.segments { display: flex; width: 118px; border: 2px solid #565656; border-radius: 6px; margin-left: 2px; overflow: hidden; }
.segments span { flex: 1; display: flex; align-items: center; justify-content: center; border-left: 2px solid #565656; }
.segments span:first-child { border-left: 0; }
.segments .on { background: #292929; }
.paint { height: 41px; margin-top: 9px; }
.draw { height: 38px; margin-top: 8px; }
.screen { margin: 16px 0 0 40px; }
.more { margin: 43px 0 0 48px; }

.document { width: 2298px; flex: none; display: flex; flex-direction: column; }
.tabs { height: 58px; background: #393939; border-bottom: 2px solid #2f2f2f; display: flex; flex: none; font-size: 20px; }
.tab { display: flex; align-items: center; gap: 19px; padding-left: 16px; border-right: 2px solid #2f2f2f; color: #a0a0a0; font-weight: 500; }
.tab path { fill: none; stroke: currentColor; stroke-width: 2.2; }
.tab.active { width: 578px; background: #484848; color: #ededed; font-weight: 600; }
.tab.second { width: 545px; }
.view { display: flex; height: 1472px; background: #525252; }
.vscroll { width: 32px; background: #404040; display: flex; flex-direction: column; align-items: center; padding: 12px 0; }
.vscroll path, .hscroll path { fill: none; stroke: #999; stroke-width: 2; }
.vthumb { width: 30px; height: 50px; border-radius: 15px; background: #535353; margin: 688px 0 auto 2px; }

.status { height: 32px; display: flex; align-items: center; background: #484848; font-size: 20px; color: #d6d6d6; }
.zoom { width: 108px; height: 32px; background: #3c3c3c; border-left: 8px solid #484848; padding: 6px 0 0 6px; line-height: 30px; overflow: hidden; }
.drop { width: 36px; height: 32px; background: #434343; border-left: 2px solid #393939; border-right: 2px solid #393939; display: flex; align-items: center; justify-content: center; padding-top: 8px; }
.nav { margin-left: 14px; }
.page { width: 80px; height: 32px; margin-left: -11px; background: #3c3c3c; padding: 6px 0 0 6px; line-height: 30px; overflow: hidden; }
.nav2 { margin-left: -2px; }
.tool { width: 400px; height: 32px; margin-left: -6px; border-left: 2px solid #3c3c3c; display: flex; justify-content: center; padding: 6px 0 0 12px; line-height: 30px; margin-right: 12px; }
.play { margin-left: 7px; }
.hscroll { flex: 1; height: 32px; background: #404040; margin-left: 9px; display: flex; align-items: center; padding: 0 12px; }
.hthumb { width: 50px; height: 30px; border-radius: 15px; background: #535353; margin: 2px auto 0 502px; }
.corner { width: 32px; height: 32px; background: #484848; }

.dock { width: 74px; flex: none; display: flex; flex-direction: column; }
.dock .panel-head { height: 24px; flex: none; }
.group { border-bottom: 2px solid #2f2f2f; padding: 6px 0 5px; display: flex; flex-direction: column; align-items: center; flex: none; }
.group .grip { margin-bottom: 5px; }
.group svg { width: 74px; height: 56px; }
.fill { flex: 1; }

/* artwork */
.art text { font-family: "Liberation Sans Narrow", "Liberation Sans", sans-serif; }
.t-title { font-weight: 700; stroke: #000; stroke-width: .9; }
.t-sub { font-style: italic; stroke: #000; stroke-width: .2; }
.t-axis { font-size: 12px; fill: #0c0c0c; stroke: #0c0c0c; stroke-width: .3; }
.t-cat { font-size: 7px; font-weight: 700; stroke: #000; stroke-width: .45; }
.art .t-small { font-family: "Open Sans", "Noto Sans", sans-serif; }
.t-head { stroke: #222; stroke-width: .25; }
.t-legend { font-size: 8.6px; font-weight: 700; stroke: #000; stroke-width: .5; }
.t-note { font-size: 13.5px; fill: #fff; stroke: #fff; stroke-width: .2; }
.ns { vector-effect: non-scaling-stroke; }
.art .maplabel text { font-family: "Noto Sans", sans-serif; font-size: 15px; fill: #777; }
.art .maplabel .city { font-size: 17px; fill: #555; font-weight: 600; }
.art .maplabel .park { fill: #6f9f7a; font-size: 12px; }
.art .t-map { font-family: "Noto Sans", sans-serif; fill: #6d6e6e; font-size: 6.4px; }
.art .t-over { fill-opacity: .45; }
```
FILE: script.js
```js
// Spread each label's letters over its slot.
document.querySelectorAll('[data-fit]').forEach(function (el) {
  var w = +el.dataset.fit, n = el.textContent.length;
  el.style.letterSpacing = ((w - el.getBoundingClientRect().width) / n) + 'px';
});
document.querySelectorAll('.tools svg').forEach(function (s) {
  s.setAttribute('viewBox', s.classList.contains('on') ? '-28 -21 56 42' : '-30 -24 60 48');
});
document.querySelectorAll('.group svg').forEach(function (s) { s.setAttribute('viewBox', '-37 -28 74 56'); });

var NS = 'http://www.w3.org/2000/svg', art = document.getElementById('art');
function add(name, attrs, text, parent) {
  var e = document.createElementNS(NS, name);
  for (var k in attrs) e.setAttribute(k, attrs[k]);
  if (text !== undefined && text !== null) e.textContent = text;
  (parent || art).appendChild(e);
  return e;
}
// Horizontal text fitted to a width
function label(cls, x, y, w, text, extra) {
  add('text', Object.assign({ 'class': cls, x: x, y: y, textLength: w, lengthAdjust: 'spacingAndGlyphs' }, extra || {}), text);
}
// Text reading upwards, starting at (x, y)
function upright(cls, x, y, w, text, extra) {
  label(cls, 0, 0, w, text, Object.assign({ transform: 'translate(' + x + ' ' + y + ') rotate(-90)' }, extra || {}));
}
function mix(a, b, t) {
  return 'rgb(' + a.map(function (v, i) { return Math.round(v + (b[i] - v) * t); }).join(',') + ')';
}
function chart(c) {
  var h = 252, top = c.y0 - h, n = c.values.length;
  upright('t-title', c.title[1], c.y0 + 1.5, c.title[2], c.title[0], { 'font-size': c.title[3] });
  if (c.sub) upright('t-sub', c.sub[0], c.y0 + 2, c.sub[1], 'RATE PER 1,000,000', { 'font-size': c.sub[2] });
  for (var v = 0; v <= c.max; v += 50) {
    var y = c.y0 - h * v / c.max, w = String(v).length * 5;
    label('t-axis', c.labelX - w, y + 4.3, w, v);
    add('path', { d: 'M' + c.x + ' ' + y + 'h6', stroke: c.line, 'stroke-width': 1.2 });
  }
  add('path', { d: 'M' + c.x + ' ' + top + 'V' + c.y0 + 'H' + c.end, fill: 'none', stroke: c.line, 'stroke-width': 1.3 });
  c.values.forEach(function (v, i) {
    var bh = h * v / c.max, bx = c.bx + i * c.pitch;
    add('rect', { x: bx, y: c.y0 - bh, width: c.bw, height: bh, fill: c.colors ? c.colors[i] : mix(c.from, c.to, i / (n - 1)) });
    var tx = c.x + (i + 1) * (c.end - c.x) / n;
    add('path', { d: 'M' + tx + ' ' + c.y0 + 'v-6.500', stroke: c.line, 'stroke-width': 1.2 });
    var len = c.lens[i];
    upright('t-cat', bx + c.bw / 2 + 2.2, c.y0 + 3 + len, len, c.names[i]);
  });
  c.cols.forEach(function (col) {
    col.rows.forEach(function (r, i) { label('t-cat', col.x, col.y + i * 10.45, r[1], c.names[r[0]]); });
  });
}
function rows(start, widths) { return widths.map(function (w, i) { return [start + i, w]; }); }

chart({ x: 599.3, y0: 847.5, max: 400, end: 850.5, labelX: 594.5, bx: 602, bw: 19.2, pitch: 25.1, line: '#262626',
  title: ['MANHATTAN NEIGHBORHOODS', 538.4, 254.500, 25.500], sub: [565.3, 156, 22],
  from: [221, 31, 123], to: [92, 75, 83],
  values: [351, 349.5, 289.5, 242, 221.5, 215, 200, 194.5, 165, 139.5],
  lens: [41, 111, 119.6, 115, 111, 42, 128, 31.8, 73.7, 76.4],
  names: ['UPPER EAST SIDE', 'MURRAY HILL, GRAMERCY & STUYVESANT TOWN', 'CHELSEA, CLINTON & MIDTOWN BUSINESS DISTRICT', 'BATTERY PARK CITY, GREENWICH VILLAGE & SOHO', 'WASHINGTON HEIGHTS, INWOOD & MARBLE HILL', 'CENTRAL HARLEM', 'HAMILTON HEIGHTS, MANHATTANVILLE & WEST HARLEM', 'EAST HARLEM', 'UPPER WEST SIDE & WEST SIDE', 'CHINATOWN & LOWER EAST SIDE'],
  cols: [{ x: 602.6, y: 1008.2, rows: rows(0, [40.6, 109.7, 118.5, 115, 111]) }, { x: 758.9, y: 1008.2, rows: rows(5, [41, 126.7, 32, 72.4, 75.7]) }] });

chart({ x: 1033, y0: 847.5, max: 300, end: 1283, labelX: 1028.3, bx: 1033.8, bw: 11.4, pitch: 14.8, line: '#262626',
  title: ['KINGS NEIGHBORHOODS', 972, 255.500, 30], sub: [999, 156, 22],
  from: [220, 183, 218], to: [105, 96, 107],
  values: [299, 261.5, 244.5, 230, 229.5, 223, 215, 203.5, 208, 185, 177, 168, 166, 163, 161.5, 160, 151],
  lens: [68.3, 82.8, 81.8, 108.8, 120.7, 115, 72.7, 84.8, 54.8, 84.8, 26, 55.8, 78.8, 106.8, 52.7, 67.3, 133.8],
  names: ['BAY RIDGE & DYKER HEIGHTS', 'SUNSET PARK & WINDSOR TERRACE', 'BRIGHTON BEACH & CONEY ISLAND', 'CROWN HEIGHTS NORTH & PROSPECT HEIGHTS', 'SHEEPSHEAD BAY, GERRITSON BEACH & HOMECREST', 'BOROUGH PARK, KENSINGTON & OCEAN PARKWAY', 'GREENPOINT & WILLIAMSBURG', 'BROOKLYN HEIGHTS & FORT GREENE', 'FLATBUSH & MIDWOOD', 'EAST FLATBUSH, FARRAGUT & RUGBY', 'BUSHWICK', 'CANARSIE & FLATLANDS', 'EAST NEW YORK & STARRETT CITY', 'PARK SLOPE, CARROLL GARDENS & RED HOOK', 'BEDFORD-STUYVESANT', 'BROWNSVILLE & OCEAN HILL', 'CROWN HEIGHTS SOUTH, PROSPECT LEFFERTS & WINGATE'],
  cols: [{ x: 1035.8, y: 1002.1, rows: rows(0, [68, 81.7, 81.2, 107.5, 120.7, 113.5, 71.3, 84, 53.7]) }, { x: 1192, y: 1002.1, rows: rows(9, [85, 24.7, 54.8, 76.8, 106, 52.6, 65.8, 132]) }] });

chart({ x: 1429.9, y0: 847.5, max: 300, end: 1681.4, labelX: 1426.2, bx: 1441.4, bw: 60.8, pitch: 84, line: '#262626',
  title: ['STATEN ISLAND NEIGHBORHOODS', 1370.3, 253.500, 22], sub: [1397, 187, 26],
  colors: ['#961d47', '#74354a', '#62434d'], values: [256, 247, 212],
  lens: [92, 81.8, 121],
  names: ['TOTTENVILLE, GREAT KILLS & ANNADALE', 'NEW SPRINGVILLE & SOUTH BEACH', "PORT RICHMOND, STAPLETON & MARINER'S HARBOR"],
  cols: [{ x: 1433.5, y: 1002.1, rows: rows(0, [91, 80.5, 120.3]) }] });

chart({ x: 1837.8, y0: 847.5, max: 300, end: 2089.3, labelX: 1834.2, bx: 1841, bw: 18.6, pitch: 25.16, line: '#9c5f80',
  title: ['BRONX RATE PER 1,000,000', 1804.8, 257, 27],
  from: [217, 102, 166], to: [95, 82, 89],
  values: [299, 297, 213.5, 207, 204, 202, 197, 195.5, 193.5, 160],
  lens: [101.4, 103.8, 110.9, 99.7, 93.3, 98.7, 113.2, 123.7, 104.8, 88.9],
  names: ['CO-OP CITY, PELHAM BAY & SCHUYLERVILLE', 'PELHAM PARKWAY, MORRIS PARK & LACONIA', 'BEDFORD PARK, FORDHAM NORTH & NORWOOD', 'WAKEFIELD, WILLIAMSBURG & WOODLAWN', 'RIVERDALE, FIELDSTON & KINGSBRIDGE', 'CONCOURSE, HIGHBRIDGE & MOUNT EDEN', 'BELMONT, CROTONA PARK EAST & EAST TREMONT', 'MORRISE HEIGHTS, FORDHAM SOUTH & MOUNT HOPE', 'CASTLE HILL, CLASON POINT & PARKCHESTER', 'HUNTS POINT, LONGWOOD & MELROSE'],
  cols: [{ x: 1848.2, y: 996, rows: rows(0, [100.4, 103, 109.3, 97.8, 91.5]) }, { x: 1996.8, y: 996, rows: rows(5, [97.3, 113, 123, 103.5, 87.9]) }] });

chart({ x: 598.8, y0: 1361.7, max: 300, end: 850.3, labelX: 594.5, bx: 601, bw: 13.7, pitch: 17.97, line: '#262626',
  title: ['QUEENS NEIGHBORHOODS', 539, 254.500, 27], sub: [565.7, 156.3, 22],
  from: [214, 200, 224], to: [127, 123, 133],
  values: [252, 230.5, 223.5, 211, 209, 203, 199, 196.5, 186, 180.5, 173.5, 164, 158, 143.5],
  lens: [88, 64, 73, 69.5, 94.8, 73, 85.4, 66.7, 116.4, 99.4, 57.4, 99.4, 70.4, 114],
  names: ['BAYSIDE, DOUGLASTON & LITTLE NECK', 'FOREST HILLS & REGO PARK', 'HOWARD BEACH & OZONE PARK', 'ASTORIA &  LONG ISLAND CITY', 'BRIARWOOD, FRESH MEADO & HILLCREST', 'RICHMOND HILL & WOODHAVEN', 'JACKSON HEIGHTS & NORTH CORONA', 'ELMHURST & SOUTH CORONA', 'FAR ROCKAWAY, BREEZY POINT & BROAD CHANNEL', 'RIDGEWOOD, GLENDALE & MIDDLE VILLAGE', 'SUNNYSIDE & WOODSIDE', 'FLUSHING, MURRAY HILL & NORTH CORONA', 'JAMAICA, HOLLIS & ST. ALBANS', 'QUEENS VILLAGE, CAMBRIA HEIGHTS & ROSEDALE'],
  cols: [{ x: 602.3, y: 1521.8, rows: rows(0, [88.3, 64.7, 73.7, 69.7, 95.3, 72.7, 85]) }, { x: 747.3, y: 1521.8, rows: rows(7, [67.7, 116.7, 99.3, 58.3, 99.7, 70.7, 114.3]) }] });

// Borough legend
[['STATEN ISLAND', '#961d47', 66, 1389], ['MANHATTAN', '#dd1f7b', 54.6, 1407.3], ['BRONX', '#d86aa8', 30.3, 1425], ['KINGS', '#d8b4d6', 26.3, 1443.3], ['QUEENS', '#f3f0f8', 35, 1461.3]].forEach(function (r, i) {
  add('circle', { cx: 1717.8, cy: r[3], r: 7.7, fill: r[1] });
  label('t-legend', 1730.7, r[3] + (i && i < 4 ? 2.3 : 3.1), r[2], r[0]);
});
[['Highest to lowerst', 80.7, 1508], ['staten island (black)', 93.3, 1543], ['manhattan (green)', 84, 1560], ['bronx (blue)', 54.5, 1577.3], ['kings county (pink)', 85.3, 1595], ['queens (yellow)', 70, 1612.3]].forEach(function (r) {
  label('t-note', 1665, r[2], r[1], r[0]);
});

// State-wide line chart
label('t-small t-head', 2194, 820, 184.5, 'Childhood cancer rates in New York State from 1976 - 2015 (ages 0-19)', { 'font-size': 7.4, fill: '#222' });
label('t-small t-head', 2194, 1187, 256, 'https://www.health.ny.gov/diseases/cancer/childhood/docs/is_childhood_cancer_increasing.pdf', { 'font-size': 7.4, fill: '#222' });
add('path', { d: 'M2193.500 922V1093H2494', fill: 'none', stroke: '#d9d9d9', 'stroke-width': 1 });
[250, 200, 150, 100, 50, 0].forEach(function (v, i) {
  var w = String(v).length * 2.5;
  label('t-small', 2188 - w, 933 + i * 32.4, w, v, { 'font-size': 5.5, fill: '#888' });
});
upright('t-cat', 2173, 1030.5, 39.5, 'RATE PER MILLION', { 'font-size': 5.5 });
var ys = [383, 378, 387, 379, 374, 374, 372, 370, 368, 362, 360, 361, 359, 343, 356, 356, 351, 360, 360, 361, 348, 370, 352, 354, 350, 342, 345, 345, 333, 343, 333, 334, 334, 337, 328, 330, 330, 310, 315, 310];
var pts = ys.map(function (y, i) { return [2203.7 + i * 7.215, 760 + y / 1.568]; });
add('polyline', { points: pts.join(' '), fill: 'none', stroke: '#7f9fd8', 'stroke-width': 1.4 });
pts.forEach(function (p, i) {
  add('circle', { cx: p[0], cy: p[1], r: 2.1, fill: '#000' });
  upright('t-small', p[0] + 2, 1110.5, 11, 1976 + i, { 'font-size': 5.5, fill: '#666' });
});

// Gray map: street mesh, town names and route shields
var roads = document.getElementById('roads'), seed = 7;
function rnd() { seed = (seed * 16807) % 2147483647; return seed / 2147483647; }
for (var i = 0; i < 520; i++) {
  var x = 290 + rnd() * 780, y = 832 + rnd() * 640;
  var d = 'M' + x + ' ' + y;
  for (var j = 0; j < 4; j++) d += 'l' + (rnd() * 60 - 25) + ' ' + (rnd() * 34 - 14);
  add('path', { d: d, 'class': 'ns', stroke: i % 5 ? '#fbfbfb' : '#d0d2d2', 'stroke-width': i % 5 ? 0.9 : 1.1 }, null, roads);
}
['M297 960C420 940 480 1000 560 1010S760 1000 860 1070 930 1090 980 1060', 'M805 837L815 930 860 1010 880 1100 850 1180', 'M340 1040C420 1070 470 1130 560 1150S700 1180 850 1190', 'M600 1474C560 1380 600 1280 660 1200S770 1060 920 1030', 'M297 1250C400 1220 500 1200 640 1210', 'M480 850C470 960 560 1060 640 1190', 'M310 1430C380 1390 420 1340 500 1290S600 1250 640 1210', 'M370 1300C440 1360 420 1420 480 1447', 'M640 840C700 900 700 960 790 1000L1000 940'].forEach(function (d) {
  add('path', { d: d, 'class': 'ns', stroke: '#c6c8c8', 'stroke-width': 1.6 }, null, roads);
});
function mx(v) { return 2130 + v / 3; }
function my(v) { return 760 + v / 1.568; }
[['Oakland', 483, 861, 52], ['Franklin Lakes', 582, 857, 90], ['Saddle River', 755, 841, 78], ['Westwood', 873, 887, 68], ['Riverdale', 418, 884, 58], ['Ridgewood', 732, 901, 70], ['Pequannock', 427, 917, 74], ['Township', 428, 927, 62], ['Glen Rock', 703, 919, 60], ['Hawthorne', 665, 935, 66], ['Fair Lawn', 707, 946, 60], ['Paramus', 803, 941, 58], ['Wayne', 462, 963, 44], ['River Edge', 861, 959, 66], ['Tenafly', 990, 964, 46], ['Paterson', 638, 973, 66], ['Great Piece', 415, 982, 78], ['Meadows', 413, 992, 64], ['Totowa', 577, 987, 46], ['Woodland', 600, 999, 62], ['Park', 598, 1009, 30], ['Garfield', 738, 1014, 50], ['Hackensack', 855, 1009, 84], ['Englewood', 974, 1001, 70], ['Fairfield', 414, 1011, 52], ['Little Falls', 577, 1028, 66], ['Clifton', 650, 1041, 48], ['Passaic', 711, 1042, 56], ['Cedar Grove', 542, 1048, 76], ['Caldwell', 462, 1062, 50], ['East', 765, 1065, 26], ['Rutherford', 765, 1075, 66], ['Montclair', 575, 1078, 64], ['Hanover', 328, 1085, 56], ['West Orange', 525, 1110, 88], ['North Bergen', 905, 1104, 86], ['Secaucus', 833, 1121, 60], ['Livingston', 372, 1124, 64], ['East Orange', 582, 1146, 92], ['Kearny', 684, 1145, 42], ['South', 442, 1142, 38], ['Mountain', 442, 1152, 64], ['Reservation', 442, 1162, 80], ['Harrison', 663, 1170, 54], ['Newark', 637, 1183, 64], ['Maplewood', 468, 1190, 70], ['Irvington', 542, 1194, 60], ['Springfield', 386, 1217, 66], ['Township', 386, 1227, 62], ['Union', 478, 1230, 32], ['Hillside', 541, 1230, 48], ['Elizabeth', 572, 1266, 66], ['Bayonne', 734, 1262, 54], ['Westfield', 343, 1272, 58], ['Clark', 400, 1308, 32], ['Linden', 514, 1315, 44], ['Rahway', 457, 1331, 50], ['Woodbridge', 445, 1384, 86], ['Township', 445, 1394, 70], ['Perth Amboy', 478, 1448, 84], ['Metuchen', 325, 1406, 50], ['STATEN ISLAND', 674, 1364, 80, 1], ['GREAT KILLS', 665, 1394, 74, 1], ['New York', 917, 1210, 88, 1], ['MANHATTAN', 978, 1129, 72, 1], ['Palisades', 1062, 924, 66], ['Interstate Park', 1066, 934, 90], ['Yonkers', 1098, 957, 64], ['BRONX', 1155, 1057, 40, 1], ['BROOKLYN', 1020, 1250, 66, 1], ['QUEENS', 1124, 1162, 50, 1]].forEach(function (t) {
  label('t-map' + (t[4] ? ' t-over' : ''), mx(t[1] - t[3] / 2), my(t[2]) + 2, t[3] / 3, t[0]);
});
[[481, 849], [335, 952], [347, 1037], [340, 1055], [509, 1122], [795, 998], [920, 1030], [798, 1110], [720, 1184], [839, 1193], [622, 1212], [646, 1211], [648, 1241], [624, 1264], [792, 1231], [414, 1210], [440, 1208], [656, 1321], [326, 1423], [314, 1437], [883, 1322], [1131, 1081], [1145, 1067], [1148, 970]].forEach(function (p) {
  add('rect', { x: mx(p[0]) - 3.3, y: my(p[1]) - 3, width: 6.6, height: 6, rx: 2.2, fill: '#7b7d7d' });
});
[[376, 889], [445, 910], [746, 857], [475, 949], [690, 967], [736, 967], [492, 984], [637, 987], [870, 982], [402, 1030], [1000, 1030], [915, 1082], [802, 1050], [682, 1100], [771, 1172], [771, 1184], [614, 1226], [545, 1251], [418, 1275], [469, 1343], [447, 1362], [412, 1360], [950, 1060], [1102, 972]].forEach(function (p) {
  add('rect', { x: mx(p[0]) - 2.8, y: my(p[1]) - 2.3, width: 5.6, height: 4.6, rx: 1.2, fill: '#e6e7e7', stroke: '#999', 'stroke-width': .6 });
});
```
